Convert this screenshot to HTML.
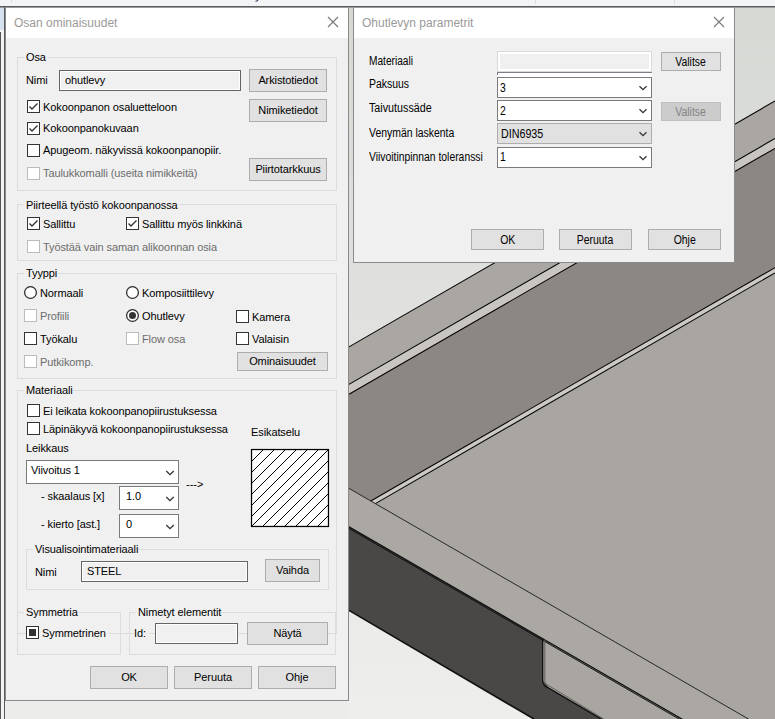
<!DOCTYPE html>
<html><head><meta charset="utf-8"><style>
html,body{margin:0;padding:0;}
body{width:775px;height:719px;position:relative;overflow:hidden;background:#ececea;font-family:"Liberation Sans", sans-serif;}
.a{position:absolute;}
.t{font-size:11px;line-height:13px;white-space:nowrap;letter-spacing:-0.1px;}
.t12{font-size:12px;line-height:14px;white-space:nowrap;}
.sx{display:inline-block;transform-origin:0 0;}
svg.a{overflow:visible;}
</style></head><body>
<svg class="a" style="left:0;top:0" width="775" height="719" viewBox="0 0 775 719">
<rect x="0" y="0" width="775" height="719" fill="#ececea"/>
<defs><linearGradient id="bgg" x1="0" y1="8" x2="0" y2="719" gradientUnits="userSpaceOnUse"><stop offset="0" stop-color="#d6d8d4"/><stop offset="1" stop-color="#eeeeec"/></linearGradient></defs><rect x="349" y="8" width="426" height="711" fill="url(#bgg)"/>
<polygon points="349.00,346.90 775.00,100.95 775.00,719.00 349.00,719.00" fill="#aaa6a2" stroke="none" stroke-width="0"/>
<polygon points="349.00,384.40 775.00,138.45 775.00,148.35 349.00,394.30" fill="#c9c5c1" stroke="none" stroke-width="0"/>
<polygon points="349.00,394.30 775.00,148.35 775.00,719.00 349.00,719.00" fill="#8c8783" stroke="none" stroke-width="0"/>
<polygon points="370.80,500.96 775.00,267.60 775.00,719.00 349.00,719.00 349.00,488.38" fill="#cdc9c5" stroke="none" stroke-width="0"/>
<polygon points="375.39,503.61 775.00,272.90 775.00,719.00 349.00,719.00 349.00,488.38" fill="#a9a5a1" stroke="none" stroke-width="0"/>
<polygon points="349.00,488.38 775.00,734.33 775.00,719.00 349.00,719.00" fill="#aba7a3" stroke="none" stroke-width="0"/>
<polygon points="349.00,526.88 775.00,772.83 775.00,719.00 349.00,719.00" fill="#4a4846" stroke="none" stroke-width="0"/>
<polygon points="349.00,610.39 534.00,719.00 349.00,719.00" fill="url(#bgg)" stroke="none" stroke-width="0"/>
<polygon points="543.30,639.06 775.00,772.83 775.00,719.00 603.50,719.00 549.60,688.20 543.30,681.00" fill="#a9a5a1" stroke="none" stroke-width="0"/>
<line x1="349.00" y1="346.90" x2="775.00" y2="100.95" stroke="#000" stroke-width="1.05"/>
<line x1="349.00" y1="384.40" x2="775.00" y2="138.45" stroke="#000" stroke-width="1.05"/>
<line x1="349.00" y1="394.30" x2="775.00" y2="148.35" stroke="#000" stroke-width="1.05"/>
<line x1="370.80" y1="500.96" x2="775.00" y2="267.60" stroke="#000" stroke-width="1.05"/>
<line x1="375.39" y1="503.61" x2="775.00" y2="272.90" stroke="#000" stroke-width="1.05"/>
<line x1="349.00" y1="488.38" x2="775.00" y2="734.33" stroke="#1a1a1a" stroke-width="0.9"/>
<line x1="349.00" y1="526.88" x2="775.00" y2="772.83" stroke="#111" stroke-width="1.3"/>
<line x1="349.00" y1="528.48" x2="775.00" y2="774.43" stroke="#111" stroke-width="1.0"/>
<line x1="349.00" y1="610.39" x2="534.00" y2="719.00" stroke="#111" stroke-width="1.7"/>
<path d="M542.6,638.65 L542.6,680.5 Q542.6,686.2 549.2,688.4 L601.8,719.5" fill="none" stroke="#111" stroke-width="1.2"/>
<path d="M544.8,639.92 L544.8,680.3 Q544.8,684.6 550.3,686.6 L604.5,719.5" fill="none" stroke="#5a5856" stroke-width="0.9"/>
</svg>
<div class="a" style="left:0px;top:0px;width:775px;height:6px;background:#f3f4f6;"></div>
<div class="a" style="left:0px;top:6px;width:775px;height:1px;background:#5c5c5c;"></div>
<div class="a" style="left:0px;top:7px;width:775px;height:1px;background:#9a9a9a;"></div>
<div class="a" style="left:0px;top:8px;width:4px;height:22px;background:#d5e1ee;"></div>
<div class="a" style="left:0px;top:30px;width:4px;height:2px;background:#f5f5f5;"></div>
<div class="a" style="left:0px;top:32px;width:1px;height:687px;background:#555;"></div>
<div class="a" style="left:1px;top:32px;width:3px;height:687px;background:#f2f2f2;"></div>
<div class="a" style="left:4px;top:6px;width:1px;height:713px;background:#5a5a5a;"></div>
<svg class="a" style="left:254px;top:-2px" width="8" height="5"><path d="M1.5,3.2 Q3.6,3.6 4.6,0.5" fill="none" stroke="#2a3050" stroke-width="1.1"/></svg>
<div class="a" style="left:11px;top:0px;width:1px;height:2px;background:#d8d8d8;"></div>
<div class="a" style="left:535px;top:0px;width:1px;height:4px;background:#dcdcdc;"></div>
<div class="a" style="left:674px;top:0px;width:1px;height:4px;background:#dcdcdc;"></div>
<div class="a" style="left:5px;top:8px;width:344px;height:693px;background:#f0f0f0;"></div>
<div class="a" style="left:5px;top:8px;width:1px;height:693px;background:#8a8a8a;"></div>
<div class="a" style="left:348px;top:8px;width:1px;height:693px;background:#8a8a8a;"></div>
<div class="a" style="left:5px;top:700px;width:344px;height:1px;background:#8a8a8a;"></div>
<div class="a" style="left:6px;top:8px;width:342px;height:30px;background:#ffffff;"></div>
<div class="a t12" style="left:14px;top:16px;color:#9a9a9a;">Osan ominaisuudet</div>
<svg class="a" style="left:328px;top:17px" width="10" height="10"><path d="M0,0 L10,10 M10,0 L0,10" stroke="#777" stroke-width="1.1"/></svg>
<div class="a" style="left:17px;top:190px;width:320px;height:1px;background:#dcdcdc;"></div>
<div class="a" style="left:17px;top:57px;width:1px;height:134px;background:#dcdcdc;"></div>
<div class="a" style="left:336px;top:57px;width:1px;height:134px;background:#dcdcdc;"></div>
<div class="a" style="left:17px;top:57px;width:7px;height:1px;background:#dcdcdc;"></div>
<div class="a" style="left:48px;top:57px;width:289px;height:1px;background:#dcdcdc;"></div>
<div class="a t" style="left:26px;top:51px;color:#000;">Osa</div>
<div class="a t" style="left:26px;top:74px;color:#000;">Nimi</div>
<div class="a" style="left:59px;top:70px;width:182px;height:21px;background:#f0f0f0;box-sizing:border-box;border:1px solid #646464;box-shadow: inset 0 0 0 1px #fff;"></div>
<div class="a t" style="left:65px;top:74px;color:#000;">ohutlevy</div>
<div class="a" style="left:249px;top:69px;width:78px;height:23px;background:#e1e1e1;box-sizing:border-box;border:1px solid #adadad;"></div>
<div class="a t" style="left:249px;width:78px;text-align:center;top:74px;color:#000">Arkistotiedot</div>
<div class="a" style="left:249px;top:99px;width:78px;height:23px;background:#e1e1e1;box-sizing:border-box;border:1px solid #adadad;"></div>
<div class="a t" style="left:249px;width:78px;text-align:center;top:104px;color:#000">Nimiketiedot</div>
<div class="a" style="left:249px;top:158px;width:78px;height:23px;background:#e1e1e1;box-sizing:border-box;border:1px solid #adadad;"></div>
<div class="a t" style="left:249px;width:78px;text-align:center;top:163px;color:#000">Piirtotarkkuus</div>
<svg class="a" style="left:27px;top:100px" width="13" height="13"><rect x="0.5" y="0.5" width="12" height="12" fill="#fff" stroke="#333"/><polyline points="2.5,6.5 5,9 10.5,3.5" fill="none" stroke="#333" stroke-width="1.4"/></svg>
<div class="a t" style="left:43px;top:101px;color:#000;">Kokoonpanon osaluetteloon</div>
<svg class="a" style="left:27px;top:122px" width="13" height="13"><rect x="0.5" y="0.5" width="12" height="12" fill="#fff" stroke="#333"/><polyline points="2.5,6.5 5,9 10.5,3.5" fill="none" stroke="#333" stroke-width="1.4"/></svg>
<div class="a t" style="left:43px;top:122px;color:#000;">Kokoonpanokuvaan</div>
<svg class="a" style="left:27px;top:144px" width="13" height="13"><rect x="0.5" y="0.5" width="12" height="12" fill="#fff" stroke="#333"/></svg>
<div class="a t" style="left:43px;top:144px;color:#000;">Apugeom. näkyvissä kokoonpanopiir.</div>
<svg class="a" style="left:27px;top:167px" width="13" height="13"><rect x="0.5" y="0.5" width="12" height="12" fill="#fff" stroke="#bcbcbc"/></svg>
<div class="a t" style="left:43px;top:167px;color:#6d6d6d;">Taulukkomalli (useita nimikkeitä)</div>
<div class="a" style="left:17px;top:260px;width:320px;height:1px;background:#dcdcdc;"></div>
<div class="a" style="left:17px;top:204px;width:1px;height:57px;background:#dcdcdc;"></div>
<div class="a" style="left:336px;top:204px;width:1px;height:57px;background:#dcdcdc;"></div>
<div class="a" style="left:17px;top:204px;width:7px;height:1px;background:#dcdcdc;"></div>
<div class="a" style="left:179px;top:204px;width:158px;height:1px;background:#dcdcdc;"></div>
<div class="a t" style="left:26px;top:199px;color:#000;">Piirteellä työstö kokoonpanossa</div>
<svg class="a" style="left:27px;top:217px" width="13" height="13"><rect x="0.5" y="0.5" width="12" height="12" fill="#fff" stroke="#333"/><polyline points="2.5,6.5 5,9 10.5,3.5" fill="none" stroke="#333" stroke-width="1.4"/></svg>
<div class="a t" style="left:43px;top:218px;color:#000;">Sallittu</div>
<svg class="a" style="left:126px;top:217px" width="13" height="13"><rect x="0.5" y="0.5" width="12" height="12" fill="#fff" stroke="#333"/><polyline points="2.5,6.5 5,9 10.5,3.5" fill="none" stroke="#333" stroke-width="1.4"/></svg>
<div class="a t" style="left:142px;top:218px;color:#000;">Sallittu myös linkkinä</div>
<svg class="a" style="left:27px;top:240px" width="13" height="13"><rect x="0.5" y="0.5" width="12" height="12" fill="#fff" stroke="#bcbcbc"/></svg>
<div class="a t" style="left:43px;top:241px;color:#6d6d6d;">Työstää vain saman alikoonnan osia</div>
<div class="a" style="left:17px;top:378px;width:320px;height:1px;background:#dcdcdc;"></div>
<div class="a" style="left:17px;top:273px;width:1px;height:106px;background:#dcdcdc;"></div>
<div class="a" style="left:336px;top:273px;width:1px;height:106px;background:#dcdcdc;"></div>
<div class="a" style="left:17px;top:273px;width:7px;height:1px;background:#dcdcdc;"></div>
<div class="a" style="left:59px;top:273px;width:278px;height:1px;background:#dcdcdc;"></div>
<div class="a t" style="left:26px;top:267px;color:#000;">Tyyppi</div>
<svg class="a" style="left:24px;top:286px" width="13" height="13"><circle cx="6.5" cy="6.5" r="5.9" fill="#fff" stroke="#2a2a2a" stroke-width="1.25"/></svg>
<div class="a t" style="left:40px;top:287px;color:#000;">Normaali</div>
<svg class="a" style="left:126px;top:286px" width="13" height="13"><circle cx="6.5" cy="6.5" r="5.9" fill="#fff" stroke="#2a2a2a" stroke-width="1.25"/></svg>
<div class="a t" style="left:142px;top:287px;color:#000;">Komposiittilevy</div>
<svg class="a" style="left:24px;top:309px" width="13" height="13"><rect x="0.5" y="0.5" width="12" height="12" fill="#fff" stroke="#bcbcbc"/></svg>
<div class="a t" style="left:40px;top:310px;color:#6d6d6d;">Profiili</div>
<svg class="a" style="left:126px;top:309px" width="13" height="13"><circle cx="6.5" cy="6.5" r="5.9" fill="#fff" stroke="#2a2a2a" stroke-width="1.25"/><circle cx="6.5" cy="6.5" r="3.5" fill="#333"/></svg>
<div class="a t" style="left:142px;top:310px;color:#000;">Ohutlevy</div>
<svg class="a" style="left:236px;top:310px" width="13" height="13"><rect x="0.5" y="0.5" width="12" height="12" fill="#fff" stroke="#333"/></svg>
<div class="a t" style="left:252px;top:311px;color:#000;">Kamera</div>
<svg class="a" style="left:24px;top:332px" width="13" height="13"><rect x="0.5" y="0.5" width="12" height="12" fill="#fff" stroke="#333"/></svg>
<div class="a t" style="left:40px;top:333px;color:#000;">Työkalu</div>
<svg class="a" style="left:126px;top:332px" width="13" height="13"><rect x="0.5" y="0.5" width="12" height="12" fill="#fff" stroke="#bcbcbc"/></svg>
<div class="a t" style="left:142px;top:333px;color:#6d6d6d;">Flow osa</div>
<svg class="a" style="left:236px;top:332px" width="13" height="13"><rect x="0.5" y="0.5" width="12" height="12" fill="#fff" stroke="#333"/></svg>
<div class="a t" style="left:252px;top:333px;color:#000;">Valaisin</div>
<svg class="a" style="left:24px;top:355px" width="13" height="13"><rect x="0.5" y="0.5" width="12" height="12" fill="#fff" stroke="#bcbcbc"/></svg>
<div class="a t" style="left:40px;top:356px;color:#6d6d6d;">Putkikomp.</div>
<div class="a" style="left:237px;top:352px;width:91px;height:19px;background:#e1e1e1;box-sizing:border-box;border:1px solid #adadad;"></div>
<div class="a t" style="left:237px;width:91px;text-align:center;top:355px;color:#000">Ominaisuudet</div>
<div class="a" style="left:17px;top:633px;width:320px;height:1px;background:#dcdcdc;"></div>
<div class="a" style="left:17px;top:390px;width:1px;height:244px;background:#dcdcdc;"></div>
<div class="a" style="left:336px;top:390px;width:1px;height:244px;background:#dcdcdc;"></div>
<div class="a" style="left:17px;top:390px;width:7px;height:1px;background:#dcdcdc;"></div>
<div class="a" style="left:73px;top:390px;width:264px;height:1px;background:#dcdcdc;"></div>
<div class="a t" style="left:26px;top:384px;color:#000;">Materiaali</div>
<svg class="a" style="left:27px;top:404px" width="13" height="13"><rect x="0.5" y="0.5" width="12" height="12" fill="#fff" stroke="#333"/></svg>
<div class="a t" style="left:43px;top:405px;color:#000;">Ei leikata kokoonpanopiirustuksessa</div>
<svg class="a" style="left:27px;top:422px" width="13" height="13"><rect x="0.5" y="0.5" width="12" height="12" fill="#fff" stroke="#333"/></svg>
<div class="a t" style="left:43px;top:423px;color:#000;">Läpinäkyvä kokoonpanopiirustuksessa</div>
<div class="a t" style="left:26px;top:442px;color:#000;">Leikkaus</div>
<div class="a t" style="left:251px;top:426px;color:#000;">Esikatselu</div>
<div class="a" style="left:250px;top:448px;width:80px;height:80px;background:#ffffff;"></div>
<svg class="a" style="left:251px;top:449px" width="78" height="78"><defs><clipPath id="cp"><rect x="0" y="0" width="78" height="78"/></clipPath></defs><g clip-path="url(#cp)" stroke="#000" stroke-width="1" shape-rendering="crispEdges"><line x1="23" y1="-10" x2="-77" y2="90"/><line x1="34" y1="-10" x2="-66" y2="90"/><line x1="45" y1="-10" x2="-55" y2="90"/><line x1="56" y1="-10" x2="-44" y2="90"/><line x1="67" y1="-10" x2="-33" y2="90"/><line x1="78" y1="-10" x2="-22" y2="90"/><line x1="88" y1="-10" x2="-12" y2="90"/><line x1="99" y1="-10" x2="-1" y2="90"/><line x1="110" y1="-10" x2="10" y2="90"/><line x1="121" y1="-10" x2="21" y2="90"/><line x1="132" y1="-10" x2="32" y2="90"/><line x1="143" y1="-10" x2="43" y2="90"/><line x1="154" y1="-10" x2="54" y2="90"/></g><rect x="0.5" y="0.5" width="77" height="77" fill="none" stroke="#000" stroke-width="1.3"/></svg>
<div class="a" style="left:26px;top:460px;width:153px;height:24px;background:#fff;box-sizing:border-box;border:1px solid #7a7a7a;"></div>
<div class="a t" style="left:31px;top:464px">Viivoitus 1</div>
<svg class="a" style="left:166px;top:471px" width="9" height="5"><polyline points="0.3,0.0 4.0,3.7 7.7,0.0" fill="none" stroke="#333" stroke-width="1.3"/></svg>
<div class="a t" style="left:186px;top:478px;color:#000;letter-spacing:0;">---&gt;</div>
<div class="a t" style="left:41px;top:490px;color:#000;">- skaalaus [x]</div>
<div class="a" style="left:119px;top:486px;width:60px;height:24px;background:#fff;box-sizing:border-box;border:1px solid #7a7a7a;"></div>
<div class="a t" style="left:126px;top:490px">1.0</div>
<svg class="a" style="left:166px;top:497px" width="9" height="5"><polyline points="0.3,0.0 4.0,3.7 7.7,0.0" fill="none" stroke="#333" stroke-width="1.3"/></svg>
<div class="a t" style="left:41px;top:518px;color:#000;">- kierto [ast.]</div>
<div class="a" style="left:119px;top:514px;width:60px;height:24px;background:#fff;box-sizing:border-box;border:1px solid #7a7a7a;"></div>
<div class="a t" style="left:126px;top:518px">0</div>
<svg class="a" style="left:166px;top:525px" width="9" height="5"><polyline points="0.3,0.0 4.0,3.7 7.7,0.0" fill="none" stroke="#333" stroke-width="1.3"/></svg>
<div class="a" style="left:26px;top:589px;width:303px;height:1px;background:#dcdcdc;"></div>
<div class="a" style="left:26px;top:549px;width:1px;height:41px;background:#dcdcdc;"></div>
<div class="a" style="left:328px;top:549px;width:1px;height:41px;background:#dcdcdc;"></div>
<div class="a" style="left:26px;top:549px;width:7px;height:1px;background:#dcdcdc;"></div>
<div class="a" style="left:139px;top:549px;width:190px;height:1px;background:#dcdcdc;"></div>
<div class="a t" style="left:35px;top:543px;color:#000;">Visualisointimateriaali</div>
<div class="a t" style="left:35px;top:566px;color:#000;">Nimi</div>
<div class="a" style="left:81px;top:561px;width:167px;height:21px;background:#f0f0f0;box-sizing:border-box;border:1px solid #646464;box-shadow: inset 0 0 0 1px #fff;"></div>
<div class="a t" style="left:87px;top:565px;color:#000;">STEEL</div>
<div class="a" style="left:265px;top:559px;width:55px;height:23px;background:#e1e1e1;box-sizing:border-box;border:1px solid #adadad;"></div>
<div class="a t" style="left:265px;width:55px;text-align:center;top:564px;color:#000">Vaihda</div>
<div class="a" style="left:17px;top:654px;width:104px;height:1px;background:#dcdcdc;"></div>
<div class="a" style="left:17px;top:612px;width:1px;height:43px;background:#dcdcdc;"></div>
<div class="a" style="left:120px;top:612px;width:1px;height:43px;background:#dcdcdc;"></div>
<div class="a" style="left:17px;top:612px;width:7px;height:1px;background:#dcdcdc;"></div>
<div class="a" style="left:78px;top:612px;width:43px;height:1px;background:#dcdcdc;"></div>
<div class="a t" style="left:26px;top:606px;color:#000;">Symmetria</div>
<div class="a" style="left:26px;top:625px;width:83px;height:15px;background:#f0f0f0;"></div>
<svg class="a" style="left:26px;top:626px" width="13" height="13"><rect x="0.5" y="0.5" width="12" height="12" fill="#fff" stroke="#333"/><rect x="3" y="3" width="7" height="7" fill="#333"/></svg>
<div class="a t" style="left:42px;top:627px;color:#000;">Symmetrinen</div>
<div class="a" style="left:129px;top:654px;width:207px;height:1px;background:#dcdcdc;"></div>
<div class="a" style="left:129px;top:612px;width:1px;height:43px;background:#dcdcdc;"></div>
<div class="a" style="left:335px;top:612px;width:1px;height:43px;background:#dcdcdc;"></div>
<div class="a" style="left:129px;top:612px;width:7px;height:1px;background:#dcdcdc;"></div>
<div class="a" style="left:220px;top:612px;width:116px;height:1px;background:#dcdcdc;"></div>
<div class="a" style="left:336px;top:612px;width:1px;height:22px;background:#dcdcdc;"></div>
<div class="a t" style="left:138px;top:606px;color:#000;">Nimetyt elementit</div>
<div class="a" style="left:134px;top:627px;width:15px;height:14px;background:#f0f0f0;"></div>
<div class="a t" style="left:134px;top:627px;color:#000;">Id:</div>
<div class="a" style="left:155px;top:623px;width:83px;height:21px;background:#f0f0f0;box-sizing:border-box;border:1px solid #646464;box-shadow: inset 0 0 0 1px #fff;"></div>
<div class="a" style="left:247px;top:622px;width:81px;height:23px;background:#e1e1e1;box-sizing:border-box;border:1px solid #adadad;"></div>
<div class="a t" style="left:247px;width:81px;text-align:center;top:627px;color:#000">Näytä</div>
<div class="a" style="left:90px;top:666px;width:78px;height:23px;background:#e1e1e1;box-sizing:border-box;border:1px solid #adadad;"></div>
<div class="a t" style="left:90px;width:78px;text-align:center;top:671px;color:#000">OK</div>
<div class="a" style="left:174px;top:666px;width:78px;height:23px;background:#e1e1e1;box-sizing:border-box;border:1px solid #adadad;"></div>
<div class="a t" style="left:174px;width:78px;text-align:center;top:671px;color:#000">Peruuta</div>
<div class="a" style="left:258px;top:666px;width:78px;height:23px;background:#e1e1e1;box-sizing:border-box;border:1px solid #adadad;"></div>
<div class="a t" style="left:258px;width:78px;text-align:center;top:671px;color:#000">Ohje</div>
<div class="a" style="left:353px;top:8px;width:382px;height:255px;background:#f0f0f0;"></div>
<div class="a" style="left:353px;top:8px;width:1px;height:255px;background:#8a8a8a;"></div>
<div class="a" style="left:734px;top:8px;width:1px;height:255px;background:#8a8a8a;"></div>
<div class="a" style="left:353px;top:262px;width:382px;height:1px;background:#8a8a8a;"></div>
<div class="a" style="left:354px;top:8px;width:380px;height:30px;background:#ffffff;"></div>
<div class="a t12" style="left:362px;top:16px;color:#9a9a9a;">Ohutlevyn parametrit</div>
<svg class="a" style="left:714px;top:17px" width="10" height="10"><path d="M0,0 L10,10 M10,0 L0,10" stroke="#777" stroke-width="1.1"/></svg>
<div class="a t12" style="left:369px;top:54px;color:#000"><span class="sx" style="transform:scaleX(0.845)">Materiaali</span></div>
<div class="a t12" style="left:369px;top:77px;color:#000"><span class="sx" style="transform:scaleX(0.87)">Paksuus</span></div>
<div class="a t12" style="left:369px;top:101px;color:#000"><span class="sx" style="transform:scaleX(0.895)">Taivutussäde</span></div>
<div class="a t12" style="left:369px;top:126px;color:#000"><span class="sx" style="transform:scaleX(0.87)">Venymän laskenta</span></div>
<div class="a t12" style="left:369px;top:150px;color:#000"><span class="sx" style="transform:scaleX(0.863)">Viivoitinpinnan toleranssi</span></div>
<div class="a" style="left:497px;top:51px;width:155px;height:21px;background:#f0f0f0;box-sizing:border-box;border:1px solid #d9d9d9;box-shadow: inset 0 0 0 2px #fff;"></div>
<div class="a" style="left:497px;top:72px;width:155px;height:5px;background:#ffffff;"></div>
<div class="a" style="left:497px;top:72px;width:155px;height:1px;background:#7b7f88;"></div>
<div class="a" style="left:497px;top:72px;width:1px;height:3px;background:#7b7f88;"></div>
<div class="a" style="left:497px;top:77px;width:155px;height:21px;background:#fff;box-sizing:border-box;border:1px solid #7a7a7a;"></div>
<div class="a t12" style="left:500px;top:81px;color:#000"><span class="sx" style="transform:scaleX(0.87)">3</span></div>
<svg class="a" style="left:639px;top:86px" width="8" height="5"><polyline points="0.5,0.3 4,3.6 7.5,0.3" fill="none" stroke="#333" stroke-width="1.3"/></svg>
<div class="a" style="left:497px;top:100px;width:155px;height:21px;background:#fff;box-sizing:border-box;border:1px solid #7a7a7a;"></div>
<div class="a t12" style="left:500px;top:104px;color:#000"><span class="sx" style="transform:scaleX(0.87)">2</span></div>
<svg class="a" style="left:639px;top:109px" width="8" height="5"><polyline points="0.5,0.3 4,3.6 7.5,0.3" fill="none" stroke="#333" stroke-width="1.3"/></svg>
<div class="a" style="left:497px;top:123px;width:155px;height:21px;background:#e1e1e1;box-sizing:border-box;border:1px solid #adadad;"></div>
<div class="a t12" style="left:501px;top:127px;color:#000"><span class="sx" style="transform:scaleX(0.893)">DIN6935</span></div>
<svg class="a" style="left:639px;top:132px" width="8" height="5"><polyline points="0.5,0.3 4,3.6 7.5,0.3" fill="none" stroke="#333" stroke-width="1.3"/></svg>
<div class="a" style="left:497px;top:147px;width:155px;height:21px;background:#fff;box-sizing:border-box;border:1px solid #7a7a7a;"></div>
<div class="a t12" style="left:500px;top:150px;color:#000"><span class="sx" style="transform:scaleX(0.87)">1</span></div>
<svg class="a" style="left:639px;top:156px" width="8" height="5"><polyline points="0.5,0.3 4,3.6 7.5,0.3" fill="none" stroke="#333" stroke-width="1.3"/></svg>
<div class="a" style="left:661px;top:52px;width:60px;height:19px;background:#e1e1e1;box-sizing:border-box;border:1px solid #adadad;"></div>
<div class="a t12" style="left:661px;width:60px;text-align:center;top:55px;color:#000"><span class="sx" style="transform:scaleX(0.866);transform-origin:50% 0">Valitse</span></div>
<div class="a" style="left:661px;top:102px;width:60px;height:19px;background:#cccccc;box-sizing:border-box;border:1px solid #bfbfbf;"></div>
<div class="a t12" style="left:661px;width:60px;text-align:center;top:105px;color:#838383"><span class="sx" style="transform:scaleX(0.866);transform-origin:50% 0">Valitse</span></div>
<div class="a" style="left:471px;top:229px;width:73px;height:21px;background:#e1e1e1;box-sizing:border-box;border:1px solid #adadad;"></div>
<div class="a t12" style="left:471px;width:73px;text-align:center;top:233px;color:#000"><span class="sx" style="transform:scaleX(0.87);transform-origin:50% 0">OK</span></div>
<div class="a" style="left:559px;top:229px;width:73px;height:21px;background:#e1e1e1;box-sizing:border-box;border:1px solid #adadad;"></div>
<div class="a t12" style="left:559px;width:73px;text-align:center;top:233px;color:#000"><span class="sx" style="transform:scaleX(0.87);transform-origin:50% 0">Peruuta</span></div>
<div class="a" style="left:648px;top:229px;width:73px;height:21px;background:#e1e1e1;box-sizing:border-box;border:1px solid #adadad;"></div>
<div class="a t12" style="left:648px;width:73px;text-align:center;top:233px;color:#000"><span class="sx" style="transform:scaleX(0.87);transform-origin:50% 0">Ohje</span></div>
</body></html>
